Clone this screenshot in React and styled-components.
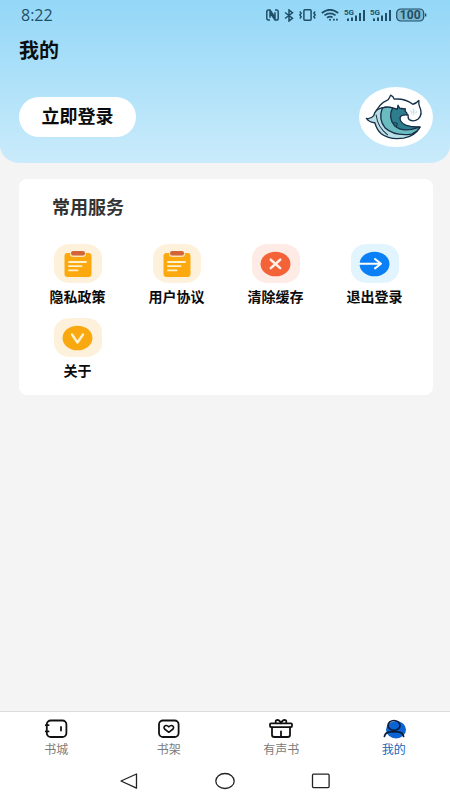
import styled, { createGlobalStyle } from "styled-components"

const GlobalStyle = createGlobalStyle`
    * {
        box-sizing: border-box;
    }

    body {
        margin: 0;
        background: #f4f4f4;
        font-family: Roboto, "Noto Sans CJK SC", sans-serif;
    }

    button {
        border: 0;
        padding: 0;
        background: none;
        font-family: inherit;
        cursor: pointer;
    }

    svg {
        display: block;
    }
`;

const Page = styled.div`
    display: flex;
    flex-direction: column;
    min-height: 100vh;
`;

const Header = styled.header`
    padding: 7px 17px 16px 19px;
    background: linear-gradient(#93d7f7, #caebfb);
    border-radius: 0 0 20px 20px / 0 0 17px 17px;
`;

const StatusBar = styled.div`
    display: flex;
    align-items: center;
    justify-content: space-between;
    height: 16px;
    padding: 0 6px 0 2px;
    color: #1f4f66;
`;

const Clock = styled.span`
    font-family: "Open Sans", sans-serif;
    font-size: 16px;
    line-height: 16px;
`;

const StatusIcons = styled.div`
    display: flex;
    align-items: center;
    gap: 5px;
`;

const Title = styled.h1`
    margin: 15px 0 23px;
    font-size: 20px;
    font-weight: 700;
    line-height: 26px;
    color: #0b0f12;
`;

const Account = styled.div`
    display: flex;
    align-items: center;
    justify-content: space-between;
`;

const LoginButton = styled.button`
    width: 117px;
    height: 40px;
    border-radius: 20px;
    background: #fff;
    color: #0b0b0b;
    font-size: 18px;
    font-weight: 700;
    line-height: 24px;
`;

const Avatar = styled.button`
    width: 74px;
    height: 60px;
    border-radius: 50%;
    background: #fff;
    overflow: hidden;
`;

const Main = styled.main`
    flex: 1;
    padding: 16px 17px 16px 19px;
`;

const Card = styled.section`
    padding: 17px 9px 15px;
    border-radius: 8px;
    background: #fff;
`;

const CardTitle = styled.h2`
    margin: 0 0 24px 24px;
    font-size: 18px;
    font-weight: 700;
    line-height: 24px;
    color: #333;
`;

const Services = styled.div`
    display: grid;
    grid-template-columns: repeat(4, 1fr);
    row-gap: 12px;
`;

const Service = styled.button`
    display: flex;
    flex-direction: column;
    align-items: center;
    gap: 5px;
    color: #0b0b0b;
    font-size: 14px;
    font-weight: 700;
    line-height: 18px;
`;

const Tile = styled.span`
    display: flex;
    align-items: center;
    justify-content: center;
    width: 48px;
    height: 39px;
    border-radius: 16px / 14px;
    background: ${({ $tint }) => $tint};
`;

const TabBar = styled.nav`
    display: grid;
    grid-template-columns: repeat(4, 1fr);
    padding: 6px 0 4px;
    border-top: 1px solid #dcdcdc;
    background: #fff;
`;

const Tab = styled.a`
    display: flex;
    flex-direction: column;
    align-items: center;
    gap: 2px;
    color: ${({ $active }) => ($active ? '#1565b8' : '#7b7b7b')};
    font-size: 12px;
    line-height: 16px;
    text-decoration: none;
`;

const SystemBar = styled.div`
    display: flex;
    justify-content: center;
    gap: 76px;
    height: 38px;
    background: #fff;
`;

const SystemButton = styled.button`
    display: flex;
    align-items: center;
    justify-content: center;
    width: 20px;
`;

const NfcIcon = () => (
    <svg width="13" height="12" viewBox="0 0 13 12" fill="none" stroke="currentColor" strokeWidth="1.5">
        <path d="M4 11H2.5Q.8 11 .8 9.2V2.8Q.8 1 2.5 1H4L9 8.5V3.2M9 1h1.5Q12.2 1 12.2 2.8v6.4q0 1.8-1.7 1.8H9L4 3.5V8.8" />
    </svg>
);

const BluetoothIcon = () => (
    <svg width="10" height="13" viewBox="0 0 10 13" fill="none" stroke="currentColor" strokeWidth="1.5">
        <path d="M1 3.5l7.5 5.7L5 12V1l3.5 2.8L1 9.5" />
    </svg>
);

const VibrateIcon = () => (
    <svg width="17" height="12" viewBox="0 0 17 12" fill="none" stroke="currentColor" strokeWidth="1.5">
        <rect x="4.9" y=".8" width="7.2" height="10.4" rx="1" />
        <path d="M.8 2.5L2.2 4.3.8 6l1.4 1.8L.8 9.5M16.2 2.5l-1.4 1.8L16.2 6l-1.4 1.8 1.4 1.7" strokeWidth="1.4" />
    </svg>
);

const WifiIcon = () => (
    <svg width="18" height="12" viewBox="0 0 18 12" fill="none" stroke="currentColor" strokeWidth="1.8">
        <path d="M.8 4Q9-2.5 17.2 4M3.4 6.4q5.6-4.2 11.2 0M6 8.8q3-2.2 5.5-.4" />
        <circle cx="9" cy="10.8" r="1" fill="currentColor" stroke="none" />
        <path d="M12 10.6h1.8M15 10.6h1.8" />
    </svg>
);

const SignalIcon = () => (
    <svg width="21" height="13" viewBox="0 0 21 13" fill="currentColor">
        <text x="0" y="6" fontSize="8" fontWeight="700" fontFamily="Roboto, sans-serif">5G</text>
        <path d="M3 9.5h2V12H3zM7 8.5h2V12H7zM11 6.5h2V12h-2zM15 4h2v8h-2zM19 1h2v11h-2z" />
    </svg>
);

const BatteryIcon = () => (
    <svg width="31" height="14" viewBox="0 0 31 14">
        <rect x=".7" y="1" width="27" height="12" rx="4" fill="#7db9d3" stroke="currentColor" strokeWidth="1.2" />
        <path d="M29.6 5.5v3" stroke="currentColor" strokeWidth="1.4" />
        <text x="14.2" y="11" textAnchor="middle" fontSize="12" fontWeight="700" fontFamily="Roboto, sans-serif" fill="currentColor">100</text>
    </svg>
);

const WaveLogo = () => (
    <svg width="74" height="60" viewBox="27 21 220 178" fill="none" stroke="#17304a" strokeWidth="4" strokeLinejoin="round" strokeLinecap="round">
        <path d="M74 104Q82 72 114 58Q118 53 121 45Q129 49 132 57Q162 54 187 72Q197 70 205 61Q204 72 207 79Q218 102 203 116Q190 126 176 118Q172 112 173 104" fill="#fff" />
        <path d="M49 114Q60 118 71 106Q74 90 88 85Q104 78 124 84L150 100L140 150L208 140Q194 166 160 173Q118 179 93 160Q80 148 74 127Q58 126 49 114Z" fill="#b9dfe4" />
        <path d="M96 84Q84 118 105 143Q132 168 184 161Q204 151 208 140L150 138L127 83Q110 77 96 84Z" fill="#6bbcc0" />
        <path d="M127 83Q112 112 133 136Q156 158 208 140Q184 141 166 134Q148 126 149 112Q153 102 171 104Q170 96 164 92L165 86L148 84L143 75L141 87Z" fill="#2d7d8c" />
        <path d="M132 126l9 4-3 9M78 104Q82 140 112 163" strokeWidth="3" />
        <path d="M180 91q5 2 4 10M188 85l2 18M193 98q5 0 6-5M184 96l10-5" stroke="#c8e3e9" strokeWidth="3" />
    </svg>
);

const ClipboardIcon = () => (
    <svg width="28" height="26" viewBox="0 0 28 26">
        <rect x="0.5" y="2" width="27" height="24" rx="3" fill="#fba90f" />
        <rect x="6" y="0" width="16" height="6" rx="3" fill="#fde3b4" />
        <rect x="7" y="0" width="14" height="4.5" rx="2.2" fill="#d2643a" />
        <path d="M5 11h17M5 15.2h12.5M5 19.4h8.5" stroke="#fff3cf" strokeWidth="1.8" strokeLinecap="round" />
    </svg>
);

const ClearIcon = () => (
    <svg width="31" height="26" viewBox="0 0 31 26">
        <ellipse cx="15.5" cy="13" rx="15" ry="12.3" fill="#f46237" />
        <path d="M10.8 8.7l9.4 8.4M20.2 8.7l-9.4 8.4" stroke="#fff0ea" strokeWidth="2.5" strokeLinecap="round" />
    </svg>
);

const LogoutIcon = () => (
    <svg width="31" height="26" viewBox="0 0 31 26">
        <ellipse cx="15.5" cy="13" rx="15" ry="12.3" fill="#0b7ff5" />
        <path d="M0 12.7h21.5M16 8l6 4.7-6 4.7" fill="none" stroke="#fff" strokeWidth="2" strokeLinecap="round" strokeLinejoin="round" />
    </svg>
);

const AboutIcon = () => (
    <svg width="31" height="26" viewBox="0 0 31 26">
        <ellipse cx="15.5" cy="13" rx="15" ry="12.3" fill="#f9a80f" />
        <path d="M10 9.5l5.5 8 5.5-8" fill="none" stroke="#fff3cf" strokeWidth="2.4" strokeLinecap="round" strokeLinejoin="round" />
    </svg>
);

const StoreIcon = () => (
    <svg width="24" height="22" viewBox="0 0 24 22" fill="none" stroke="#111" strokeWidth="1.8" strokeLinecap="round">
        <rect x="2.8" y="2.5" width="19.6" height="16.5" rx="4" />
        <path d="M1.8 7.2h2.8M1.8 13.4h2.8M17 9v3.6" />
    </svg>
);

const ShelfIcon = () => (
    <svg width="24" height="22" viewBox="0 0 24 22" fill="none" stroke="#111" strokeWidth="1.8" strokeLinejoin="round">
        <rect x="2" y="2.5" width="19.6" height="16.5" rx="4" />
        <path d="M11.8 14.3L7.6 11Q6.2 9 8 7.8Q10 6.9 11.8 8.8Q13.6 6.9 15.6 7.8Q17.4 9 16 11Z" strokeWidth="1.6" />
    </svg>
);

const GiftIcon = () => (
    <svg width="24" height="22" viewBox="0 0 24 22" fill="none" stroke="#111" strokeWidth="1.8" strokeLinejoin="round" strokeLinecap="round">
        <rect x="1" y="5.3" width="22" height="3.8" rx="1" />
        <path d="M3 9.2v7.5q0 2.3 2.3 2.3h13.4q2.3 0 2.3-2.3V9.2M12 13.4V19M12 5.2Q10.7 2 8.2 1.8 6.2 2 6.8 5M12 5.2Q13.3 2 15.8 1.8 17.8 2 17.2 5" />
    </svg>
);

const MineIcon = () => (
    <svg width="24" height="22" viewBox="0 0 24 22" fill="none" stroke="#0b1f3d" strokeWidth="1.7" strokeLinecap="round">
        <ellipse cx="14" cy="11.7" rx="10" ry="8.7" fill="#0c63d4" stroke="none" />
        <ellipse cx="12" cy="7.4" rx="6" ry="4.9" />
        <path d="M2.4 18.5Q3.2 14.2 8 13.8H16Q20.8 14.2 21.6 18.5" />
    </svg>
);

const BackIcon = () => (
    <svg width="20" height="18" viewBox="0 0 20 18" fill="none" stroke="#222" strokeWidth="1.3" strokeLinejoin="round">
        <path d="M2 9L17.5 2v14.2Z" />
    </svg>
);

const HomeIcon = () => (
    <svg width="20" height="18" viewBox="0 0 20 18" fill="none" stroke="#222" strokeWidth="1.3">
        <ellipse cx="10" cy="9" rx="9.2" ry="7.5" />
    </svg>
);

const RecentIcon = () => (
    <svg width="20" height="18" viewBox="0 0 20 18" fill="none" stroke="#222" strokeWidth="1.3">
        <rect x="1.5" y="2.2" width="16.6" height="13.4" rx="1" />
    </svg>
);

const services = [
    { name: '隐私政策', tint: '#fef1dc', Icon: ClipboardIcon },
    { name: '用户协议', tint: '#fef1dc', Icon: ClipboardIcon },
    { name: '清除缓存', tint: '#feebe6', Icon: ClearIcon },
    { name: '退出登录', tint: '#e2f5fe', Icon: LogoutIcon },
    { name: '关于', tint: '#fef1dc', Icon: AboutIcon }
];

const tabs = [
    { name: '书城', url: '#store', Icon: StoreIcon },
    { name: '书架', url: '#shelf', Icon: ShelfIcon },
    { name: '有声书', url: '#audio', Icon: GiftIcon },
    { name: '我的', url: '#mine', Icon: MineIcon, active: true }
];

export default function App() {
    return (
        <>
            <GlobalStyle />
            <Page>
                <Header>
                    <StatusBar>
                        <Clock>8:22</Clock>
                        <StatusIcons>
                            <NfcIcon />
                            <BluetoothIcon />
                            <VibrateIcon />
                            <WifiIcon />
                            <SignalIcon />
                            <SignalIcon />
                            <BatteryIcon />
                        </StatusIcons>
                    </StatusBar>
                    <Title>我的</Title>
                    <Account>
                        <LoginButton type="button">立即登录</LoginButton>
                        <Avatar type="button" aria-label="头像">
                            <WaveLogo />
                        </Avatar>
                    </Account>
                </Header>
                <Main>
                    <Card>
                        <CardTitle>常用服务</CardTitle>
                        <Services>
                            {services.map(({ name, tint, Icon }) => (
                                <Service key={name} type="button">
                                    <Tile $tint={tint}>
                                        <Icon />
                                    </Tile>
                                    {name}
                                </Service>
                            ))}
                        </Services>
                    </Card>
                </Main>
                <TabBar>
                    {tabs.map(({ name, url, Icon, active }) => (
                        <Tab key={name} href={url} $active={active} aria-current={active ? 'page' : undefined}>
                            <Icon />
                            {name}
                        </Tab>
                    ))}
                </TabBar>
                <SystemBar>
                    <SystemButton type="button" aria-label="返回"><BackIcon /></SystemButton>
                    <SystemButton type="button" aria-label="主页"><HomeIcon /></SystemButton>
                    <SystemButton type="button" aria-label="最近任务"><RecentIcon /></SystemButton>
                </SystemBar>
            </Page>
        </>
    )
}
